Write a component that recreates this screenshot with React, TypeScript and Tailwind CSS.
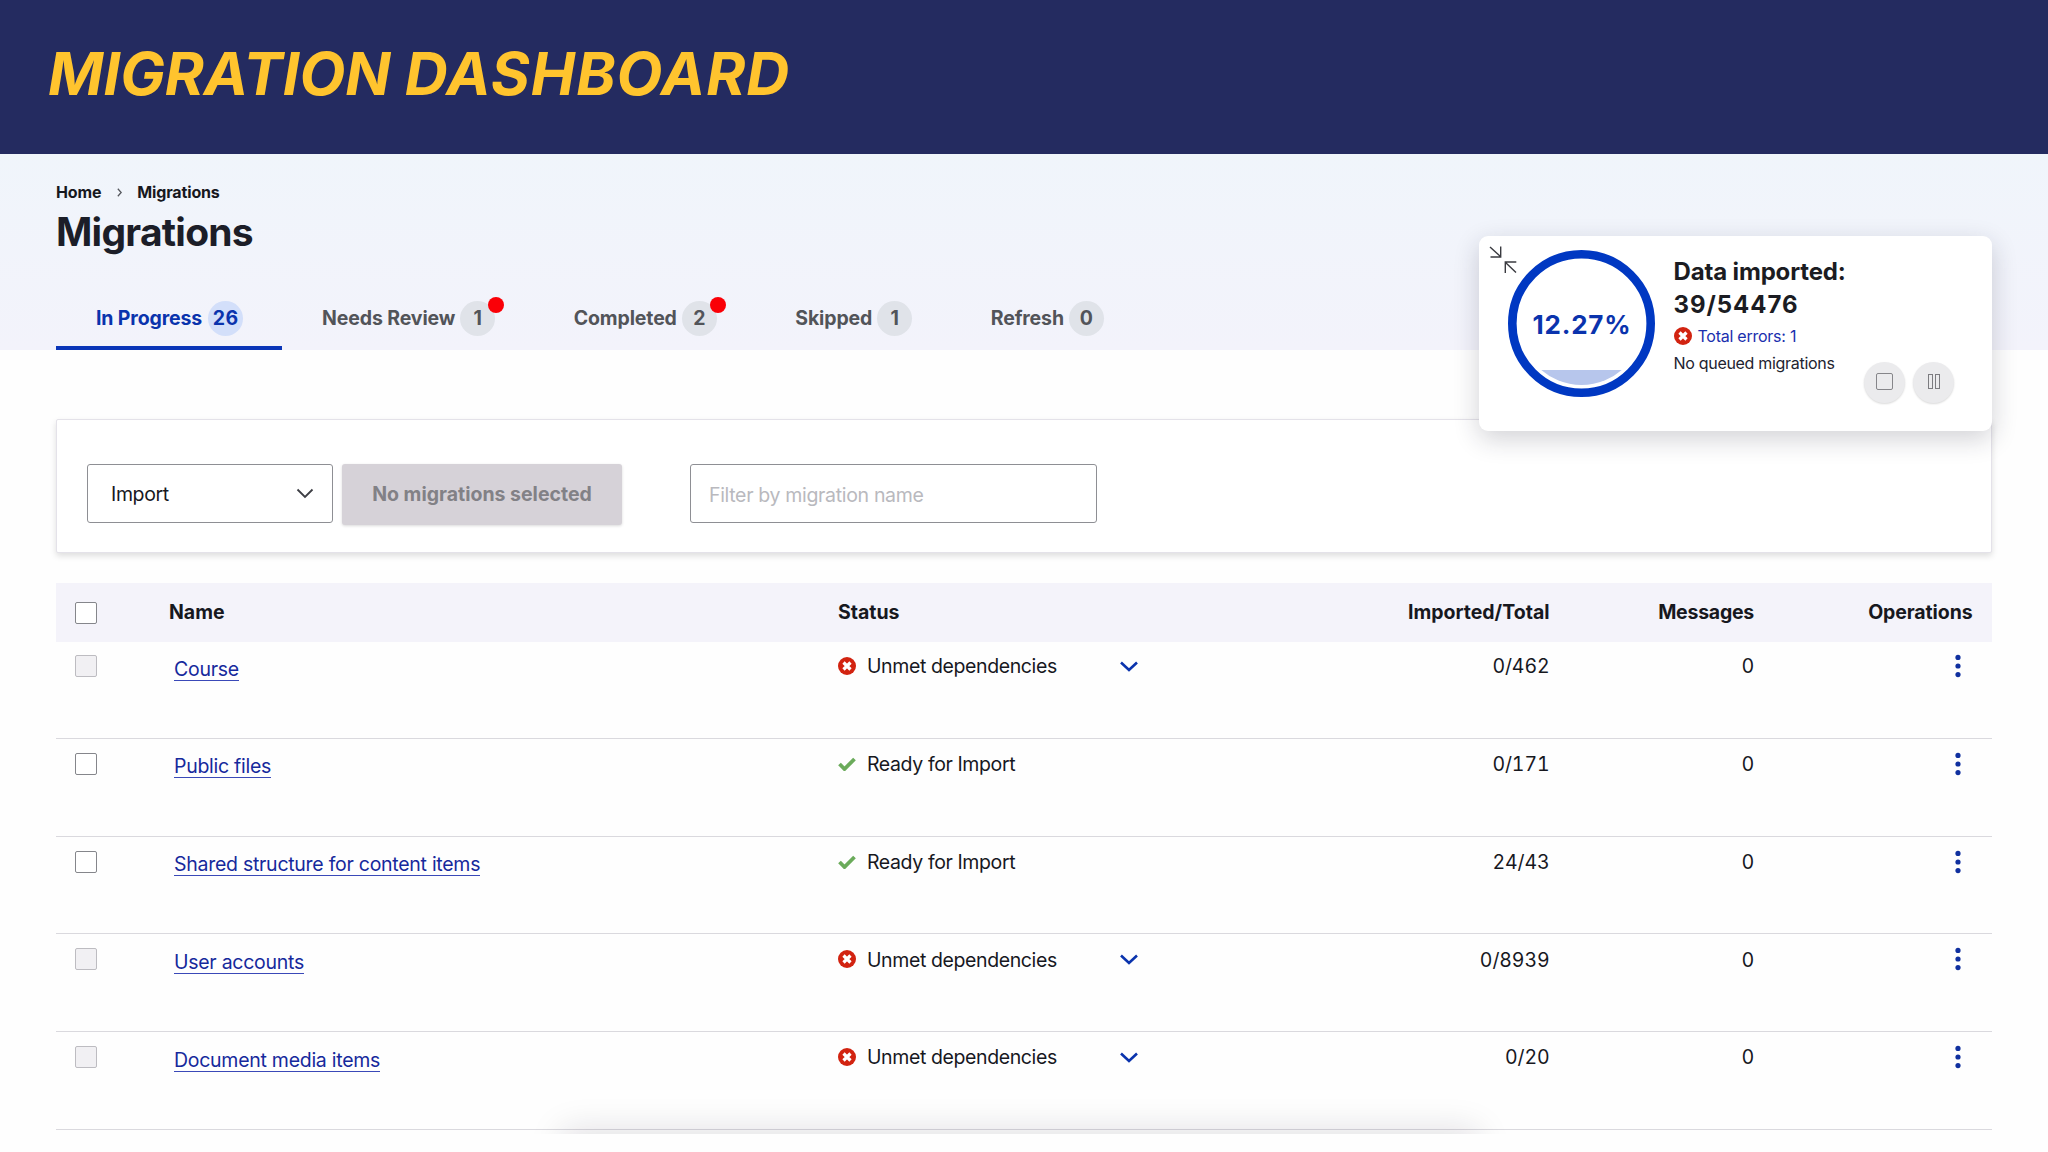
import React from "react";

type Tab = { label: string; count: number; active?: boolean; alert?: boolean };
type Row = { name: string; ready: boolean; imported: string; messages: number };

const tabs: Tab[] = [
  { label: "In Progress", count: 26, active: true },
  { label: "Needs Review", count: 1, alert: true },
  { label: "Completed", count: 2, alert: true },
  { label: "Skipped", count: 1 },
  { label: "Refresh", count: 0 },
];

const rows: Row[] = [
  { name: "Course", ready: false, imported: "0/462", messages: 0 },
  { name: "Public files", ready: true, imported: "0/171", messages: 0 },
  { name: "Shared structure for content items", ready: true, imported: "24/43", messages: 0 },
  { name: "User accounts", ready: false, imported: "0/8939", messages: 0 },
  { name: "Document media items", ready: false, imported: "0/20", messages: 0 },
];

function ErrorIcon({ className }: { className: string }) {
  return (
    <svg viewBox="0 0 18 18" className={className}>
      <circle cx="9" cy="9" r="9" fill="#d22310" />
      <path d="M5.500 5.500l7 7M12.500 5.500l-7 7" stroke="#fff" strokeWidth="3.200" />
    </svg>
  );
}

function CheckIcon() {
  return (
    <svg viewBox="0 0 18 14" className="h-[14px] w-[18px]">
      <path d="M1.5 7l5 5L16.5 2" fill="none" stroke="#6bab5b" strokeWidth="3.8" />
    </svg>
  );
}

function Checkbox({ disabled }: { disabled?: boolean }) {
  return (
    <span
      className={
        disabled
          ? "block size-[22px] rounded-[2px] border-[1.5px] border-[#bdbcc1] bg-[#f1f0f3]"
          : "block size-[22px] rounded-[2px] border-[1.5px] border-[#85868b] bg-white"
      }
    />
  );
}

function TabItem({ tab }: { tab: Tab }) {
  return (
    <div
      className={
        tab.active
          ? "flex h-full items-center border-b-4 border-[#0a35b8] pt-1 pr-[39px] pl-10 text-[#0a33ad]"
          : "flex h-full items-center pr-[38.5px] pl-10 text-[#525459]"
      }
    >
      <span className="pt-[2px] text-[19.5px] font-bold tracking-[-0.13px]">{tab.label}</span>
      <span
        className={
          tab.active
            ? "relative ml-[6px] flex size-[35px] items-center justify-center rounded-full bg-[#d3dffa] pt-[2px] text-[19.5px] font-bold tracking-[0.3px]"
            : "relative ml-[5px] flex size-[35px] items-center justify-center rounded-full bg-[#e0e3e9] pt-[2px] text-[19.5px] font-bold"
        }
      >
        {tab.count}
        {tab.alert && <span className="absolute -top-[4px] -right-[9px] size-4 rounded-full bg-[#fa0007]" />}
      </span>
    </div>
  );
}

function ProgressCard() {
  return (
    <section className="absolute top-[236px] left-[1479px] flex h-[195px] w-[513px] rounded-[9px] bg-white shadow-[0_8px_26px_rgba(30,32,50,0.2)]">
      <svg viewBox="0 0 28 28" className="absolute top-[9px] left-[10px] size-7" fill="none" stroke="#3a3b40" strokeWidth="1.400">
        <path d="M1 2l10.500 9.500M11.700 1.500v10.500H1.500M27 27.500L16.500 17.500M16.300 28V17h11" />
      </svg>
      <div className="relative mt-[14px] ml-[28.5px] flex size-[147px] items-center justify-center">
        <svg viewBox="0 0 147 147" className="absolute inset-0">
          <clipPath id="water">
            <rect x="0" y="120" width="147" height="28" />
          </clipPath>
          <circle cx="73.500" cy="73.500" r="61.500" fill="#b7c6ec" clipPath="url(#water)" />
          <circle cx="73.500" cy="73.500" r="69.200" fill="none" stroke="#0038c2" strokeWidth="8.600" />
        </svg>
        <span className="relative pt-px pl-[2px] text-[26px] font-bold tracking-[0.8px] text-[#0a33ad]">12.27%</span>
      </div>
      <div className="mt-[20px] ml-[19px]">
        <div className="text-[24px] leading-8 font-bold tracking-[-0.15px] text-[#1b1c22]">Data imported:</div>
        <div className="pt-px text-[24px] leading-8 font-bold tracking-[0.95px] text-[#1b1c22]">39/54476</div>
        <div className="mt-[2px] flex h-[26px] items-center text-[16px] tracking-[-0.25px] text-[#1a2fae]">
          <ErrorIcon className="mr-[6px] size-[18px]" />
          Total errors: 1
        </div>
        <div className="pt-px text-[16px] leading-[26px] tracking-[-0.3px] text-[#222330]">No queued migrations</div>
      </div>
      <div className="absolute right-[38px] bottom-[28px] flex gap-2">
        <button className="flex size-[41px] items-center justify-center rounded-full bg-[#ebebed] shadow-[0_1px_2px_rgba(0,0,0,0.15)]">
          <span className="mb-[3px] size-[17px] rounded-[2px] border-[1.5px] border-[#86868a]" />
        </button>
        <button className="flex size-[41px] items-center justify-center gap-[2px] rounded-full bg-[#ebebed] shadow-[0_1px_2px_rgba(0,0,0,0.15)]">
          <span className="mb-[3px] h-[15px] w-[5px] border-[1.5px] border-[#7c7c80]" />
          <span className="mb-[3px] h-[15px] w-[5px] border-[1.5px] border-[#7c7c80]" />
        </button>
      </div>
    </section>
  );
}

const columns = "grid grid-cols-[19px_94px_669px_366px_345.5px_204.5px_218.5px]";

export default function App() {
  return (
    <div className="relative h-[1152px] w-[2048px] overflow-hidden bg-[#fefefe] font-['Inter',sans-serif] text-[#17181e]">
      <header className="flex h-[154px] items-center bg-[#242b60] pb-[6px] pl-[48px]">
        <h1 className="text-[59.5px] leading-none font-bold text-[#ffc42e] italic">
          <span className="tracking-[0px]">MIGRATION </span>
          <span className="tracking-[1px]">DASHBOARD</span>
        </h1>
      </header>

      <div className="h-[196px] bg-linear-to-b from-[#f0f5fb] to-[#f3f3fb] pt-[26px] pl-[56px]">
        <nav className="flex h-6 items-center text-[16px] font-bold tracking-[-0.15px]">
          <span>Home</span>
          <svg viewBox="0 0 6 10" className="mr-[15px] ml-[16px] h-[9px] w-[5px]" fill="none" stroke="#55575d" strokeWidth="1.500">
            <path d="M1 .5l4 4.500-4 4.500" />
          </svg>
          <span>Migrations</span>
        </nav>
        <h2 className="mt-[5px] text-[39px] leading-[46px] font-bold tracking-[-0.75px] text-[#1c1e28]">Migrations</h2>
        <div className="mt-[31px] flex h-16">
          {tabs.map((tab) => (
            <TabItem key={tab.label} tab={tab} />
          ))}
        </div>
      </div>

      <main className="px-14 pt-[69px]">
        <div className="flex h-[134px] items-start rounded-[2px] border border-[#e4e2e9] bg-white pt-[44px] pl-[30px] shadow-[0_3px_6px_rgba(0,0,0,0.13)]">
          <div className="flex h-[59px] w-[246px] items-center justify-between rounded-[3px] border-[1.5px] border-[#8e8f94] pr-[18px] pl-[23px] text-[19.5px] tracking-[-0.35px]">
            <span className="pt-[2px]">Import</span>
            <svg viewBox="0 0 18 11" className="h-[11px] w-[18px]" fill="none" stroke="#3d3e44" strokeWidth="1.800">
              <path d="M1.500 1.500L9 9l7.500-7.500" />
            </svg>
          </div>
          <button className="ml-[9px] h-[61px] w-[280px] rounded-[3px] bg-[#d6d2d8] text-[19.5px] font-bold text-[#828186] shadow-[0_1px_3px_rgba(0,0,0,0.15)]">
            No migrations selected
          </button>
          <input
            className="ml-[68px] h-[59px] w-[407px] rounded-[3px] border-[1.5px] border-[#8e8f94] pt-[2px] pl-[18px] text-[19.5px] tracking-[-0.33px] placeholder:text-[#b9b9be]"
            placeholder="Filter by migration name"
          />
        </div>

        <div className="mt-[30px]">
          <div className={`${columns} -mb-px h-[59px] items-center bg-[#f4f3fa] text-[19.5px] font-bold`}>
            <span />
            <Checkbox />
            <span className="pt-px">Name</span>
            <span className="pt-px">Status</span>
            <span className="pt-px text-right">Imported/Total</span>
            <span className="pt-px text-right tracking-[-0.25px]">Messages</span>
            <span className="pt-px text-right tracking-[-0.1px]">Operations</span>
          </div>
          {rows.map((row) => (
            <div key={row.name} className="h-[97.75px] border-b-[1.5px] border-[#dad9de] text-[19.5px]">
              <div className={`${columns} h-[50px] items-center`}>
                <span />
                <Checkbox disabled={!row.ready} />
                <a className="relative top-[3px] ml-[5px] justify-self-start border-b-[1.5px] border-[#3a49b8] leading-[22px] tracking-[-0.27px] text-[#16299c]">
                  {row.name}
                </a>
                <div className="flex items-center tracking-[-0.39px]">
                  {row.ready ? <CheckIcon /> : <ErrorIcon className="size-[18px]" />}
                  <span className="ml-[11px] w-[252.5px] pt-[2px]">{row.ready ? "Ready for Import" : "Unmet dependencies"}</span>
                  {!row.ready && (
                    <svg viewBox="0 0 18 11" className="h-[11px] w-[18px]" fill="none" stroke="#0a33ad" strokeWidth="2.600">
                      <path d="M1 1.500L9 9l8-7.500" />
                    </svg>
                  )}
                </div>
                <span className="pt-[2px] text-right tracking-[-0.1px] tabular-nums">{row.imported}</span>
                <span className="pt-[2px] text-right">{row.messages}</span>
                <svg viewBox="0 0 6 24" className="mr-[12px] h-6 w-[6px] justify-self-end fill-[#10309f]">
                  <circle cx="3" cy="3.400" r="2.600" />
                  <circle cx="3" cy="12" r="2.600" />
                  <circle cx="3" cy="20.600" r="2.600" />
                </svg>
              </div>
            </div>
          ))}
        </div>
      </main>

      <ProgressCard />

      <div className="pointer-events-none absolute top-[1074px] left-[510px] h-[60px] w-[1020px] overflow-hidden">
        <div className="mx-[52px] mt-[60px] h-10 shadow-[0_-4px_34px_rgba(20,16,40,0.13)]" />
      </div>
    </div>
  );
}
